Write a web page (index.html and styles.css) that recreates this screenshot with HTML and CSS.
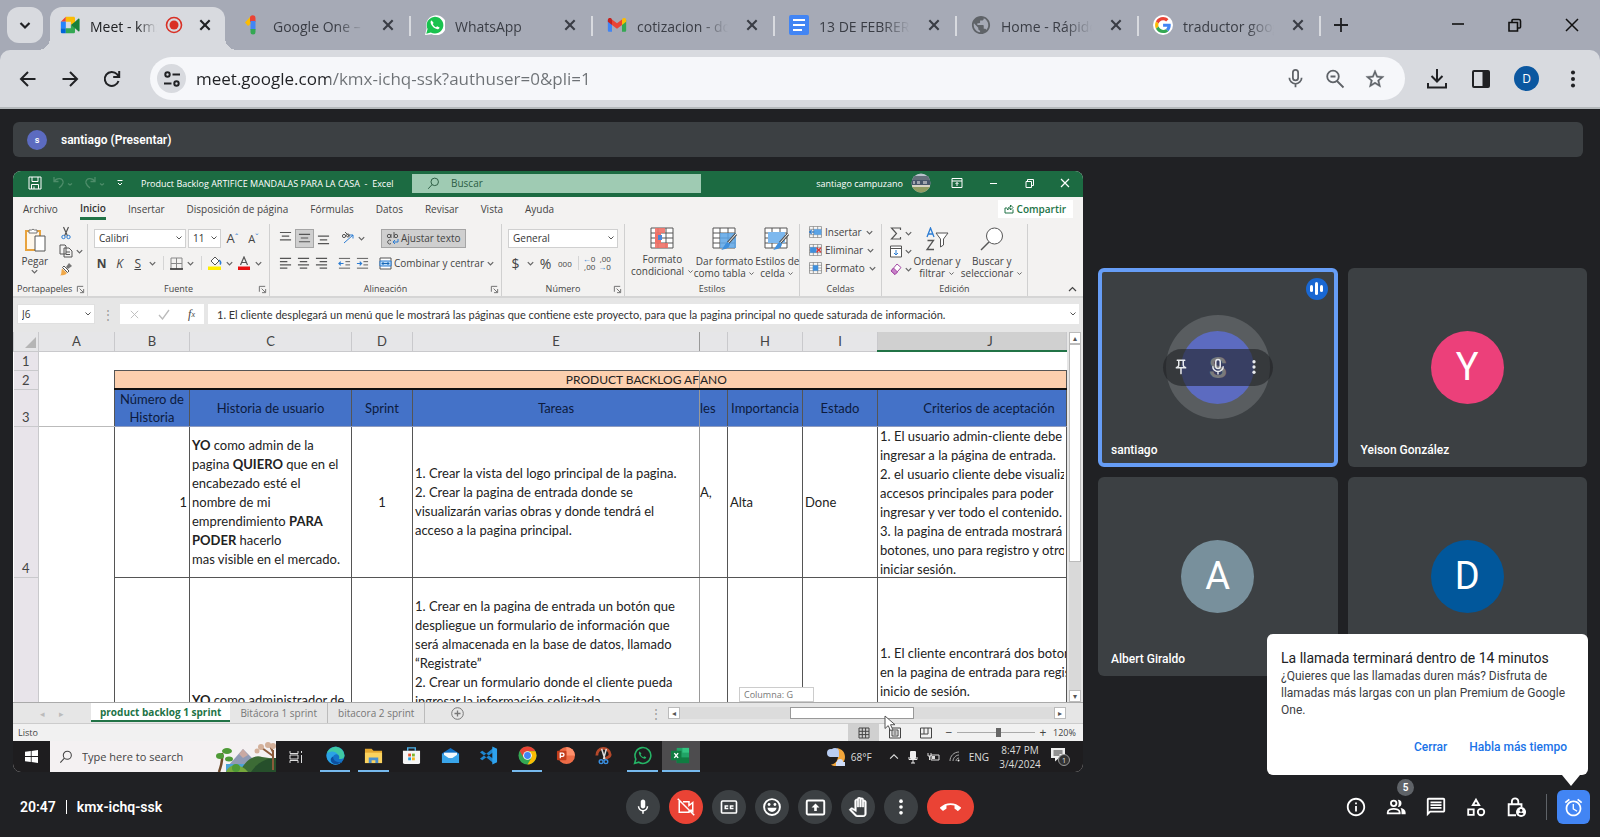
FILE: index.html
```html
<!DOCTYPE html>
<html lang="es">
<head>
<meta charset="utf-8">
<meta name="viewport" content="width=device-width, initial-scale=1">
<title>Meet - kmx-ichq-ssk</title>
<link rel="stylesheet" href="styles.css">
</head>
<body>
<svg class="defs" aria-hidden="true">
  <symbol id="x" viewBox="0 0 12 12"><path d="M2 2l8 8M10 2l-8 8" stroke="currentColor" stroke-width="1.8" fill="none"/></symbol>
  <symbol id="chev" viewBox="0 0 10 10"><path d="M2 3.5l3 3 3-3" stroke="currentColor" stroke-width="1.4" fill="none"/></symbol>
  <symbol id="mic" viewBox="0 0 24 24"><path fill="currentColor" d="M12 14c1.66 0 3-1.34 3-3V5c0-1.66-1.34-3-3-3S9 3.34 9 5v6c0 1.66 1.34 3 3 3zm5-3c0 2.76-2.24 5-5 5s-5-2.24-5-5H5c0 3.53 2.61 6.43 6 6.92V21h2v-3.08c3.39-.49 6-3.39 6-6.92h-2z"/></symbol>
  <symbol id="mico" viewBox="0 0 24 24"><g fill="none" stroke="currentColor" stroke-width="2"><rect x="9" y="2" width="6" height="12" rx="3"/><path d="M5 11a7 7 0 0 0 14 0M12 18v4"/></g></symbol>
  <symbol id="dots" viewBox="0 0 24 24"><g fill="currentColor"><circle cx="12" cy="5" r="2.2"/><circle cx="12" cy="12" r="2.2"/><circle cx="12" cy="19" r="2.2"/></g></symbol>
  <symbol id="lens" viewBox="0 0 16 16"><g fill="none" stroke="currentColor" stroke-width="1.2"><circle cx="9.5" cy="6" r="4.6"/><path d="M6.2 9.4L1.5 14.5"/></g></symbol>
  <symbol id="launch" viewBox="0 0 10 10"><path d="M1.5 7.500V1.500H8M4 4l4 4M8.500 4.500V8.500H4.500" stroke="#666" fill="none"/></symbol>
  <symbol id="lines" viewBox="0 0 14 14"><path d="M1 2.500h12M3 6.500h8M1 10.500h12" stroke="#555" stroke-width="1.200"/></symbol>
  <symbol id="left" viewBox="0 0 14 14"><path d="M1 1.500h12M1 5h8M1 8.500h12M1 12h8" stroke="#555" stroke-width="1.200"/></symbol>
  <symbol id="center" viewBox="0 0 14 14"><path d="M1 1.500h12M3 5h8M1 8.500h12M3 12h8" stroke="#555" stroke-width="1.200"/></symbol>
  <symbol id="right" viewBox="0 0 14 14"><path d="M1 1.500h12M5 5h8M1 8.500h12M5 12h8" stroke="#555" stroke-width="1.200"/></symbol>
  <symbol id="wa" viewBox="0 0 24 24"><path d="M1.500 22.500l1.600-5.700A10 10 0 1 1 7 20.900z" fill="currentColor"/><path d="M8 6.500c-.8.300-1.500 1.300-1.300 2.600.6 3.800 4.200 7.400 8.100 8 1.300.1 2.500-.9 2.700-2.200l-3-1.500-1.300 1.400c-1.700-.7-3.100-2-3.900-3.900l1.100-1.300z" fill="#fff"/></symbol>
  <symbol id="grid" viewBox="0 0 24 22"><path d="M1 1h22v20H1z" fill="#fff"/><path d="M1 1h22v20H1zM1 6h22M1 11h22M1 16h22M8 1v20M16 1v20" fill="none" stroke="#555"/></symbol>
</svg>

<header class="browser">
  <div class="tabstrip">
    <button class="tabsearch" aria-label="Buscar pestañas"><svg width="16" height="16" viewBox="0 0 16 16"><path d="M3.500 6l4.500 4.500L12.500 6" fill="none" stroke="#202124" stroke-width="2.200"/></svg></button>
    <div class="tab active">
      <svg class="fav" viewBox="0 0 24 24"><path d="M1 8l6-6v6z" fill="#ea4335"/><path d="M7 2h9c1.500 0 2 .8 2 2v5l-5 3V8H7z" fill="#fbbc04"/><path d="M1 8h6v8H1z" fill="#2684fc"/><path d="M1 16h6v6H3c-1.400 0-2-.8-2-2z" fill="#0066da"/><path d="M7 16h6v-4l5 3v5c0 1.400-.8 2-2 2H7z" fill="#34a853"/><path d="M13 12l5-4 4-3.500c.6-.5 1.500-.2 1.500.8v13.400c0 1-.9 1.300-1.500.8L18 16z" fill="#188038"/></svg>
      <span class="title">Meet - kmx-ichq-ssk</span>
      <svg class="rec" viewBox="0 0 18 18"><circle cx="9" cy="9" r="7.500" fill="none" stroke="#d93025" stroke-width="1.600"/><circle cx="9" cy="9" r="4.500" fill="#d93025"/></svg>
      <button aria-label="Cerrar"><svg width="14" height="14"><use href="#x"/></svg></button>
    </div>
    <div class="tab"><svg class="fav" viewBox="0 0 20 20"><path d="M8 1l2 6-5 4-3-3.500z" fill="#fbbc04"/><path d="M7 3a2.700 2.700 0 0 1 5.500 0v4H7z" fill="#ea4335"/><path d="M7.500 6h5v9h-5z" fill="#4285f4"/><path d="M7.500 14h5v3a2.500 2.500 0 0 1-5 0z" fill="#34a853"/></svg><span class="title">Google One – Plan</span><button aria-label="Cerrar"><svg width="14" height="14"><use href="#x"/></svg></button></div>
    <div class="tab"><svg class="fav" viewBox="0 0 24 24"><path d="M0 24l2-8A12 12 0 1 1 8 23z" fill="#fff"/><use href="#wa" color="#19c24e"/></svg><span class="title">WhatsApp</span><button aria-label="Cerrar"><svg width="14" height="14"><use href="#x"/></svg></button></div>
    <div class="tab"><svg class="fav" viewBox="0 0 24 24"><path d="M1 6v12.500c0 1 .6 1.500 1.500 1.500H6V9z" fill="#4285f4"/><path d="M23 6v12.500c0 1-.6 1.500-1.500 1.500H18V9z" fill="#34a853"/><path d="M6 5.500l6 4.500 6-4.500V12l-6 4.500L6 12z" fill="#ea4335"/><path d="M1 6c0-2.500 2.500-3 4-2l1 1.500V12L1 8z" fill="#c5221f"/><path d="M23 6c0-2.500-2.500-3-4-2l-1 1.500V12l5-4z" fill="#fbbc04"/></svg><span class="title">cotizacion - documento</span><button aria-label="Cerrar"><svg width="14" height="14"><use href="#x"/></svg></button></div>
    <div class="tab"><svg class="fav" viewBox="0 0 20 20"><rect width="20" height="20" rx="2" fill="#4285f4"/><path d="M4 5h12M4 10h12M4 15h9" stroke="#fff" stroke-width="2.200"/></svg><span class="title">13 DE FEBRERO DE</span><button aria-label="Cerrar"><svg width="14" height="14"><use href="#x"/></svg></button></div>
    <div class="tab"><svg class="fav" viewBox="1 1 22 22"><path fill="#5f6368" d="M12 2C6.480 2 2 6.480 2 12s4.480 10 10 10 10-4.480 10-10S17.520 2 12 2zm-1 17.930c-3.950-.49-7-3.850-7-7.930 0-.62.08-1.210.21-1.790L9 15v1c0 1.100.9 2 2 2v1.930zm6.900-2.540c-.26-.81-1-1.390-1.900-1.390h-1v-3c0-.55-.45-1-1-1H8v-2h2c.55 0 1-.45 1-1V7h2c1.100 0 2-.9 2-2v-.41c2.930 1.190 5 4.060 5 7.410 0 2.080-.8 3.970-2.100 5.390z"/></svg><span class="title">Home - Rápido y</span><button aria-label="Cerrar"><svg width="14" height="14"><use href="#x"/></svg></button></div>
    <div class="tab"><svg class="fav" viewBox="0 0 48 48"><circle cx="24" cy="24" r="24" fill="#fff"/><g transform="translate(5 5) scale(.8)"><path fill="#EA4335" d="M24 9.500c3.540 0 6.710 1.220 9.210 3.600l6.850-6.850C35.900 2.380 30.470 0 24 0 14.620 0 6.510 5.380 2.560 13.220l7.980 6.190C12.430 13.720 17.740 9.500 24 9.500z"/><path fill="#4285F4" d="M46.980 24.550c0-1.570-.15-3.090-.38-4.550H24v9.020h12.940c-.58 2.960-2.260 5.480-4.780 7.180l7.730 6c4.510-4.180 7.090-10.360 7.090-17.650z"/><path fill="#FBBC05" d="M10.530 28.590c-.48-1.450-.76-2.990-.76-4.590s.27-3.140.76-4.590l-7.980-6.190C.92 16.460 0 20.120 0 24c0 3.880.92 7.540 2.560 10.780l7.970-6.190z"/><path fill="#34A853" d="M24 48c6.480 0 11.930-2.130 15.890-5.810l-7.730-6c-2.150 1.450-4.920 2.300-8.160 2.300-6.260 0-11.570-4.220-13.470-9.910l-7.980 6.190C6.510 42.620 14.620 48 24 48z"/></g></svg><span class="title">traductor google</span><button aria-label="Cerrar"><svg width="14" height="14"><use href="#x"/></svg></button></div>
    <button class="newtab" aria-label="Nueva pestaña"><svg width="14" height="14" viewBox="0 0 14 14"><path d="M7 0v14M0 7h14" stroke="#202124" stroke-width="1.800"/></svg></button>
    <div class="winctl">
      <button aria-label="Minimizar"><svg width="14" height="14" viewBox="0 0 14 14"><path d="M1 6h12" stroke="#111" stroke-width="1.600"/></svg></button>
      <button aria-label="Restaurar"><svg width="14" height="14" viewBox="0 0 14 14"><path d="M1 4.500h8.500V13H1zM4 4V2.500q0-1 1-1h6q1.500 0 1.500 1.500v6q0 1-1 1H10" fill="none" stroke="#111" stroke-width="1.600"/></svg></button>
      <button aria-label="Cerrar ventana"><svg width="14" height="14" viewBox="0 0 14 14"><path d="M1 1l12 12M13 1L1 13" stroke="#111" stroke-width="1.500"/></svg></button>
    </div>
  </div>
  <div class="toolbar">
    <div class="nav">
      <button aria-label="Atrás"><svg width="18" height="18" viewBox="0 0 18 18"><path d="M16.500 9H2M9 2L2 9l7 7" class="ln"/></svg></button>
      <button aria-label="Adelante"><svg width="18" height="18" viewBox="0 0 18 18"><path d="M1.500 9H16M9 2l7 7-7 7" class="ln"/></svg></button>
      <button aria-label="Recargar"><svg width="18" height="18" viewBox="0 0 18 18"><path d="M15.500 11A7 7 0 1 1 14 4.200l2 2M16.200 1v6h-6" class="ln"/></svg></button>
    </div>
    <form class="omnibox">
      <button type="button" class="site" aria-label="Información del sitio"><svg width="18" height="18" viewBox="0 0 18 18"><g fill="none" stroke="#202124" stroke-width="2"><circle cx="4.500" cy="4.500" r="2.200"/><path d="M9.500 4.500H17M1 13.500h7.500"/><circle cx="13.500" cy="13.500" r="2.200"/></g></svg></button>
      <input class="url" aria-label="Dirección" value="meet.google.com/kmx-ichq-ssk?authuser=0&amp;pli=1">
      <button type="button" aria-label="Voz"><svg width="21" height="21"><use href="#mico"/></svg></button>
      <button type="button" aria-label="Zoom"><svg width="20" height="20" viewBox="0 0 20 20"><g fill="none" stroke="currentColor" stroke-width="1.800"><circle cx="8" cy="7.500" r="5.800"/><path d="M12 12l6.500 6.500M5.500 7.500h5"/></g></svg></button>
      <button type="button" aria-label="Marcador"><svg width="22" height="22" viewBox="0 0 24 24"><path fill="currentColor" stroke="currentColor" stroke-width=".4" d="M22 9.240l-7.190-.62L12 2 9.190 8.630 2 9.240l5.460 4.730L5.820 21 12 17.270 18.180 21l-1.630-7.030L22 9.240zM12 15.400l-3.760 2.270 1-4.280-3.320-2.880 4.380-.38L12 6.100l1.710 4.040 4.380.38-3.320 2.880 1 4.280L12 15.400z"/></svg></button>
    </form>
    <div class="actions">
      <button aria-label="Descargas"><svg width="22" height="22" viewBox="0 0 22 22"><path d="M11 1v12M5.500 8l5.500 5.500L16.500 8M2 15v4.500h18V15" class="ln"/></svg></button>
      <button aria-label="Panel lateral"><svg width="20" height="20" viewBox="0 0 20 20"><rect x="2" y="2" width="16" height="16" rx="1" class="ln"/><path d="M11.500 2H18v16h-6.500z" fill="#202124"/></svg></button>
      <button class="me" aria-label="Perfil">D</button>
      <button aria-label="Menú"><svg width="22" height="22"><use href="#dots"/></svg></button>
    </div>
  </div>
</header>

<main class="meet">
  <div class="banner"><span class="av">s</span>santiago (Presentar)</div>
  <div class="stage">
    <section class="share" aria-label="Presentación">
      <div class="xtitle">
        <div class="quick">
          <button aria-label="Guardar"><svg width="14" height="14" viewBox="0 0 14 14"><path d="M1 1h12v12H1zM4 1v4.500h6V1M3.500 13V8.500h7V13M6 13v-2.500" fill="none" stroke="#fff"/></svg></button>
          <button class="dim" aria-label="Deshacer"><svg width="22" height="14" viewBox="0 0 22 14"><path d="M2 1v4.500h4.500M2 5.500C5 1 12 2 11 7c-.5 2-2 3.500-4 5M16 7.500l2 1.500 2-1.500" fill="none" stroke="currentColor" stroke-width="1.300"/></svg></button>
          <button class="dim" aria-label="Rehacer"><svg width="22" height="14" viewBox="0 0 22 14"><path d="M11 1v4.500H6.500M11 5.500C8 1 1 2 2 7c.5 2 2 3.500 4 5M16 7.500l2 1.500 2-1.500" fill="none" stroke="currentColor" stroke-width="1.300"/></svg></button>
          <button aria-label="Personalizar"><svg width="8" height="8" viewBox="0 0 8 8"><path d="M1.500 1.500h5M2 4l2 2 2-2" stroke="#fff" fill="none"/></svg></button>
        </div>
        <h1>Product Backlog ARTIFICE MANDALAS PARA LA CASA &nbsp;-&nbsp; Excel</h1>
        <label class="xsearch"><svg width="13" height="13"><use href="#lens"/></svg><input placeholder="Buscar" aria-label="Buscar"></label>
        <div class="account"><span>santiago campuzano</span>
          <svg width="20" height="20" viewBox="0 0 20 20"><clipPath id="cp"><circle cx="10" cy="10" r="9.500"/></clipPath><g clip-path="url(#cp)"><path d="M0 0h20v20H0z" fill="#b9c2cc"/><path d="M0 3h20v4H0z" fill="#65707c"/><path d="M0 7h20v6H0z" fill="#48566b"/><path d="M2 8h2v3H2zM6 8h3v3H6zM12 8h4v3h-4z" fill="#9fa3ad"/><path d="M0 13h20v7H0z" fill="#8f9b62"/><path d="M0 12h20v2H0z" fill="#d8d3c5"/></g></svg></div>
        <div class="xwin">
          <button aria-label="Opciones de cinta"><svg width="12" height="12" viewBox="0 0 12 12"><path d="M1 1.500h10v9H1zM1 4h10M6 9V5.500M4.500 7L6 5.500 7.500 7" fill="none" stroke="#fff"/></svg></button>
          <button aria-label="Minimizar"><svg width="9" height="9" viewBox="0 0 9 9"><path d="M1 4.500h7" stroke="#fff"/></svg></button>
          <button aria-label="Restaurar"><svg width="9" height="9" viewBox="0 0 9 9"><path d="M1 2.500h5.500v6H1zM2.500 2V.5h6v6H7" fill="none" stroke="#fff"/></svg></button>
          <button aria-label="Cerrar"><svg width="10" height="10" viewBox="0 0 10 10"><path d="M1 1l8 8M9 1L1 9" stroke="#fff" stroke-width="1.200"/></svg></button>
        </div>
      </div>
      <nav class="xtabs">
        <button>Archivo</button><button class="on">Inicio</button><button>Insertar</button><button>Disposición de página</button><button>Fórmulas</button><button>Datos</button><button>Revisar</button><button>Vista</button><button>Ayuda</button>
        <button class="sharebtn"><svg width="10" height="10" viewBox="0 0 10 10"><path d="M3 4H1v5h8V5.500M3.500 6c0-2 1-3 3-3V1L9 3.500 6.500 6V4.500C5 4.500 4 5 3.500 6z" fill="none" stroke="#217346"/></svg>Compartir</button>
      </nav>
      <div class="ribbon">
        <div class="grp g1">
          <div class="body">
            <button class="big"><svg width="22" height="26" viewBox="0 0 22 26"><path d="M2 4h14v19H2z" fill="#fff7ea" stroke="#e8a33d" stroke-width="2"/><path d="M5 6V3h2.500a2 2 0 0 1 3 0H13v3z" fill="#fff" stroke="#777"/><path d="M11 9h10v15H11z" fill="#fff" stroke="#555"/></svg><span>Pegar</span><svg class="c" width="9" height="9"><use href="#chev"/></svg></button>
            <div class="col">
              <button aria-label="Cortar"><svg width="14" height="14" viewBox="0 0 14 14"><path d="M4.500 1l4 9M9.500 1l-4 9" stroke="#555" stroke-width="1.200"/><circle cx="4.500" cy="11" r="1.700" fill="none" stroke="#2b7cd3"/><circle cx="9.500" cy="11" r="1.700" fill="none" stroke="#2b7cd3"/></svg></button>
              <button aria-label="Copiar"><svg width="14" height="14" viewBox="0 0 14 14"><path d="M1 1h5l1 1v8H1zM5 4h5l3 3v6H5zM7 8h4M7 10.500h4" fill="#f3f2f1" stroke="#555"/></svg><svg class="c" width="9" height="9"><use href="#chev"/></svg></button>
              <button aria-label="Copiar formato"><svg width="14" height="14" viewBox="0 0 14 14"><path d="M7 5l3-4 3 3-4 3z" fill="#777"/><path d="M5 4l5 5-1.500 1.500-5-5z" fill="#fff" stroke="#555"/><path d="M3 6.500L8 11c-2 2.500-4 2-7 2.500 2-1.500 1-4 2-7z" fill="#f0a94a"/></svg></button>
            </div>
          </div>
          <div class="lbl">Portapapeles</div><svg class="ln2" width="9" height="9"><use href="#launch"/></svg>
        </div>
        <div class="grp g2">
          <div class="rows">
            <div class="row"><select class="ff" aria-label="Fuente"><option>Calibri</option></select><select class="fs" aria-label="Tamaño"><option>11</option></select><button class="ag">A<sup>ˆ</sup></button><button class="as">A<sup>ˇ</sup></button></div>
            <div class="row r2"><button class="b">N</button><button class="i">K</button><button class="u">S</button><svg class="c" width="9" height="9"><use href="#chev"/></svg><i class="sep"></i>
              <button aria-label="Bordes"><svg width="13" height="13" viewBox="0 0 13 13"><path d="M1 1h11v11H1zM1 6.500h11M6.500 1v11" fill="none" stroke="#888"/><path d="M0 12h13" stroke="#333" stroke-width="1.500"/></svg></button><svg class="c" width="9" height="9"><use href="#chev"/></svg><i class="sep"></i>
              <button aria-label="Relleno"><svg width="14" height="14" viewBox="0 0 14 14"><path d="M3 5l4-4 4 4-4 4z" fill="#fff" stroke="#555"/><path d="M11 4c1.500 1 2 3 1 4.500" stroke="#2b7cd3" stroke-width="1.500" fill="none"/><path d="M0 10.500h13V14H0z" fill="#ffee00"/></svg></button><svg class="c" width="9" height="9"><use href="#chev"/></svg>
              <button aria-label="Color de fuente"><svg width="14" height="14" viewBox="0 0 14 14"><path d="M3.500 9L7 1l3.500 8M5 6.500h4" fill="none" stroke="#555" stroke-width="1.200"/><path d="M1 10.500h12V14H1z" fill="#e81010"/></svg></button><svg class="c" width="9" height="9"><use href="#chev"/></svg>
            </div>
          </div>
          <div class="lbl">Fuente</div><svg class="ln2" width="9" height="9"><use href="#launch"/></svg>
        </div>
        <div class="grp g3">
          <div class="rows">
            <div class="row al"><button aria-label="Arriba"><svg width="13" height="13" viewBox="0 2 14 14"><use href="#lines" width="14" height="14"/></svg></button><button class="sel" aria-label="Medio"><svg width="13" height="13"><use href="#lines"/></svg></button><button aria-label="Abajo"><svg width="13" height="13" viewBox="0 -2 14 14"><use href="#lines" width="14" height="14"/></svg></button>
              <button class="ori" aria-label="Orientación"><svg width="14" height="14" viewBox="0 0 14 14"><path d="M3 12L12 4M12 4H8.500M12 4v3.500" stroke="#2b7cd3" fill="none"/><circle cx="3" cy="5" r="1.600" fill="none" stroke="#555"/><path d="M4 1l4 4" stroke="#555"/><circle cx="7" cy="4.500" r="1.500" fill="none" stroke="#555"/></svg></button><svg class="c" width="9" height="9"><use href="#chev"/></svg>
              <button class="wrap"><svg width="13" height="13" viewBox="0 0 13 13"><circle cx="3" cy="4" r="1.700" fill="none" stroke="#555"/><path d="M5 2v4M8 0v6M5 8.500a2 2 0 1 0 0 3" stroke="#555" fill="none"/><circle cx="10" cy="4" r="1.700" fill="none" stroke="#555"/><path d="M12 7v3H7M9 8l-2 2 2 2" stroke="#2b7cd3" fill="none"/></svg>Ajustar texto</button></div>
            <div class="row al r2"><button aria-label="Izquierda"><svg width="13" height="13"><use href="#left"/></svg></button><button aria-label="Centro"><svg width="13" height="13"><use href="#center"/></svg></button><button aria-label="Derecha"><svg width="13" height="13"><use href="#right"/></svg></button>
              <button class="ori" aria-label="Reducir sangría"><svg width="13" height="13" viewBox="0 0 14 14"><path d="M1 1.500h12M8 5h5M8 8.500h5M1 12h12" stroke="#555"/><path d="M1 7h5M3 5L1 7l2 2" stroke="#2b7cd3" fill="none" stroke-width="1.300"/></svg></button><button aria-label="Aumentar sangría"><svg width="13" height="13" viewBox="0 0 14 14"><path d="M1 1.500h12M8 5h5M8 8.500h5M1 12h12" stroke="#555"/><path d="M1 7h5M4 5l2 2-2 2" stroke="#2b7cd3" fill="none" stroke-width="1.300"/></svg></button>
              <button class="merge"><svg width="13" height="13" viewBox="0 0 13 13"><path d="M1 1h11v11H1z" fill="#fff" stroke="#555"/><path d="M1 4h11v5H1z" fill="#bfdcf6" stroke="#2b7cd3"/><path d="M3 6.500h7M4.500 5L3 6.500 4.500 8M8.500 5L10 6.500 8.500 8" stroke="#1667b7" fill="none"/></svg>Combinar y centrar <svg class="c" width="9" height="9"><use href="#chev"/></svg></button></div>
          </div>
          <div class="lbl">Alineación</div><svg class="ln2" width="9" height="9"><use href="#launch"/></svg>
        </div>
        <div class="grp g4">
          <div class="rows">
            <div class="row"><select class="nf" aria-label="Formato de número"><option>General</option></select></div>
            <div class="row r2 num"><button class="lg">$</button><svg class="c" width="9" height="9"><use href="#chev"/></svg><button class="lg">%</button><button class="sm">000</button><i class="sep"></i>
              <button class="dec"><b>←</b>0<br>,00</button><button class="dec">,00<br><b>→</b>0</button></div>
          </div>
          <div class="lbl">Número</div><svg class="ln2" width="9" height="9"><use href="#launch"/></svg>
        </div>
        <div class="grp g5">
          <div class="body">
            <button class="big"><svg width="24" height="22"><use href="#grid"/><path d="M5 1h10v5H5zM5 16h13v5H5z" fill="#f07167" opacity=".9"/><path d="M5 6h6v10H5z" fill="#f07167"/><path d="M8 8h4v5H8z" fill="#4a86d8"/></svg><span>Formato<br>condicional <svg class="c" width="7" height="7"><use href="#chev"/></svg></span></button>
            <button class="big"><svg width="26" height="24" viewBox="0 0 26 24"><use href="#grid" width="24" height="22"/><path d="M8 6h16v15H8z" fill="#5ca4e6" opacity=".85"/><path d="M24 7l-8 9" stroke="#555" stroke-width="3"/><path d="M24 7l-8 9" stroke="#fff"/><path d="M16 15l2 2c-1 5-5 5-9 6 3-2 3-6 7-8z" fill="#3f8fdc"/></svg><span>Dar formato<br>como tabla <svg class="c" width="7" height="7"><use href="#chev"/></svg></span></button>
            <button class="big"><svg width="26" height="24" viewBox="0 0 26 24"><use href="#grid" width="24" height="22"/><path d="M4 5h17v11H4z" fill="#7db8ee"/><path d="M24 7l-8 9" stroke="#555" stroke-width="3"/><path d="M24 7l-8 9" stroke="#fff"/><path d="M16 15l2 2c-1 5-5 5-9 6 3-2 3-6 7-8z" fill="#3f8fdc"/></svg><span>Estilos de<br>celda <svg class="c" width="7" height="7"><use href="#chev"/></svg></span></button>
          </div>
          <div class="lbl">Estilos</div>
        </div>
        <div class="grp g6">
          <div class="col">
            <button><svg width="13" height="12" viewBox="0 0 24 22"><use href="#grid"/><path d="M9 6h14v10H9z" fill="#5ca4e6"/><path d="M10 11H1M5 7l-4 4 4 4" stroke="#2b7cd3" stroke-width="2" fill="none"/></svg>Insertar<svg class="c" width="9" height="9"><use href="#chev"/></svg></button>
            <button><svg width="13" height="12" viewBox="0 0 24 22"><use href="#grid"/><path d="M2 6h12v10H2z" fill="#3f8fdc"/><path d="M14 7l8 8M22 7l-8 8" stroke="#d33" stroke-width="2.500"/></svg>Eliminar<svg class="c" width="9" height="9"><use href="#chev"/></svg></button>
            <button><svg width="13" height="12" viewBox="0 0 24 22"><use href="#grid"/><path d="M7 6h10v10H7z" fill="#3f8fdc"/></svg>Formato<svg class="c" width="9" height="9"><use href="#chev"/></svg></button>
          </div>
          <div class="lbl">Celdas</div>
        </div>
        <div class="grp g7">
          <div class="body">
            <div class="col">
              <button aria-label="Autosuma"><svg width="12" height="13" viewBox="0 0 12 13"><path d="M10.500 3V1H1.500l5 5.500-5 5.500h9v-2" fill="none" stroke="#555" stroke-width="1.200"/></svg><svg class="c" width="9" height="9"><use href="#chev"/></svg></button>
              <button aria-label="Rellenar"><svg width="12" height="13" viewBox="0 0 12 13"><path d="M.5 1h11v11H.5zM.5 3.500h11" fill="#fff" stroke="#555"/><path d="M6 5v5M4 8l2 2 2-2" stroke="#2b7cd3" fill="none"/></svg><svg class="c" width="9" height="9"><use href="#chev"/></svg></button>
              <button aria-label="Borrar"><svg width="12" height="13" viewBox="0 0 12 13"><path d="M1 8l6-7 4 3.500-6 7z" fill="#fff" stroke="#a349a4"/><path d="M1 8l2.500-3L7.500 9 5 11.500z" fill="#c77fc8" stroke="#a349a4"/></svg><svg class="c" width="9" height="9"><use href="#chev"/></svg></button>
            </div>
            <button class="big"><svg width="24" height="24" viewBox="0 0 24 24"><path d="M2 10L5.500 1 9 10M3 7h5" fill="none" stroke="#2b7cd3" stroke-width="1.300"/><path d="M2.500 13.500h6L2 22.500h7" fill="none" stroke="#555" stroke-width="1.300"/><path d="M11 6h12l-4.500 6v6l-3 2v-8z" fill="#fff" stroke="#555"/></svg><span>Ordenar y<br>filtrar <svg class="c" width="7" height="7"><use href="#chev"/></svg></span></button>
            <button class="big"><svg width="24" height="24" viewBox="0 0 24 24"><circle cx="14.500" cy="9" r="8" fill="#fff" stroke="#555"/><path d="M9 15l-8 8" stroke="#555" stroke-width="1.400"/></svg><span>Buscar y<br>seleccionar <svg class="c" width="7" height="7"><use href="#chev"/></svg></span></button>
          </div>
          <div class="lbl">Edición</div>
        </div>
        <button class="collapse" aria-label="Contraer la cinta"><svg width="9" height="9" viewBox="0 0 9 9"><path d="M1 6l3.500-3.500L8 6" fill="none" stroke="#444" stroke-width="1.200"/></svg></button>
      </div>
      <div class="fbar">
        <select class="namebox" aria-label="Cuadro de nombres"><option>J6</option></select>
        <span class="grip">⋮</span>
        <div class="fx"><button aria-label="Cancelar"><svg width="11" height="11" viewBox="0 0 12 12"><path d="M2 2l8 8M10 2l-8 8" stroke="#bbb"/></svg></button><button aria-label="Introducir"><svg width="12" height="11" viewBox="0 0 12 11"><path d="M1 6l3.500 4L11 1" stroke="#bbb" stroke-width="1.300" fill="none"/></svg></button><button class="f">f<small>x</small></button></div>
        <input class="formula" aria-label="Barra de fórmulas" value="1. El cliente desplegará un menú que le mostrará las páginas que contiene este proyecto, para que la pagina principal no quede saturada de información.">
      </div>
      <div class="sheetwrap">
        <div class="sheet">
          <table>
            <colgroup><col class="w0"><col class="wa"><col class="wb"><col class="wc"><col class="wd"><col class="we"><col class="wg"><col class="wh"><col class="wi"><col></colgroup>
            <thead><tr><th class="corner"><svg width="11" height="11" viewBox="0 0 11 11"><path d="M11 0v11H0z" fill="#b5b5b5"/></svg></th><th>A</th><th>B</th><th>C</th><th>D</th><th class="fz">E</th><th></th><th>H</th><th>I</th><th class="cur">J</th></tr></thead>
            <tbody>
              <tr class="t1"><th>1</th><td class="n"></td><td class="n" colspan="4"></td><td class="n" colspan="4"></td></tr>
              <tr class="t2"><th>2</th><td class="n"></td><td colspan="4" class="pb r fz">PRODUCT BACKLOG AF</td><td colspan="4" class="pb">ANO</td></tr>
              <tr class="t3"><th>3</th><td class="n fr"></td><td>Número de Historia</td><td>Historia de usuario</td><td>Sprint</td><td class="fz">Tareas</td><td class="l">les</td><td>Importancia</td><td>Estado</td><td class="crit">Criterios de aceptación</td></tr>
              <tr class="t4"><th>4</th><td class="n"></td><td class="r">1</td><td><b>YO</b> como admin de la<br>pagina <b>QUIERO</b> que en el<br>encabezado esté el<br>nombre de mi<br>emprendimiento <b>PARA</b><br><b>PODER</b> hacerlo<br>mas visible en el mercado.</td><td class="m">1</td><td class="fz">1. Crear la vista del logo principal de la pagina.<br>2. Crear la pagina de entrada donde se<br>visualizarán varias obras y donde tendrá el<br>acceso a la pagina principal.</td><td class="l">A,<br>&nbsp;</td><td>Alta</td><td>Done</td><td><div class="clip">1. El usuario admin-cliente debe<br>ingresar a la página de entrada.<br>2. el usuario cliente debe visualizar<br>accesos principales para poder<br>ingresar y ver todo el contenido.<br>3. la pagina de entrada mostrará dos<br>botones, uno para registro y otro para<br>iniciar sesión.</div></td></tr>
              <tr class="t5"><th></th><td class="n"></td><td></td><td class="p3"><b>YO</b> como administrador de</td><td></td><td class="p1 fz">1. Crear en la pagina de entrada un botón que<br>despliegue un formulario de información que<br>será almacenada en la base de datos, llamado<br>“Registrate”<br>2. Crear un formulario donde el cliente pueda<br>ingresar la información solicitada</td><td></td><td></td><td></td><td class="p2">1. El cliente encontrará dos botones<br>en la pagina de entrada para registro<br>inicio de sesión.</td></tr>
            </tbody>
          </table>
        </div>
        <div class="vscroll"><span class="arr">▴</span><span class="thumb"></span><span class="track"></span><span class="arr">▾</span></div>
        <div class="coltip">Columna: G</div>
      </div>
      <div class="stabs">
        <div class="prev"><span>◂</span><span>▸</span></div>
        <button class="on">product backlog 1 sprint</button><button>Bitácora 1 sprint</button><button>bitacora 2 sprint</button>
        <button class="add" aria-label="Hoja nueva"><svg width="13" height="13" viewBox="0 0 13 13"><circle cx="6.500" cy="6.500" r="5.800" fill="none" stroke="#777"/><path d="M6.500 3.500v6M3.500 6.500h6" stroke="#777" stroke-width="1.300"/></svg></button>
        <div class="hscroll"><span class="grip">⋮</span><span class="arr">◂</span><span class="ht"><span class="hthumb"></span></span><span class="arr">▸</span></div>
      </div>
      <div class="status"><span>Listo</span>
        <div class="views">
          <button class="sel" aria-label="Normal"><svg width="12" height="12" viewBox="0 0 12 12"><path d="M1 1h10v10H1zM1 4.300h10M1 7.600h10M4.300 1v10M7.600 1v10" fill="none" stroke="#444"/></svg></button>
          <button aria-label="Diseño de página"><svg width="12" height="12" viewBox="0 0 12 12"><path d="M.5 1h11v10H.5zM3 3h6v6H3zM4.500 5h3M4.500 7h3" fill="none" stroke="#444"/></svg></button>
          <button aria-label="Vista de saltos"><svg width="12" height="12" viewBox="0 0 12 12"><path d="M.5 1h11v10H.5zM4 1v6M8 1v6M.5 7H8" fill="none" stroke="#444"/></svg></button>
          <span>−</span><input type="range" aria-label="Zoom de hoja" min="0" max="100" value="53"><span>+</span><span class="pct">120%</span>
        </div>
        <svg class="cursor" width="12" height="17" viewBox="0 0 12 17"><path d="M1 1v12.500l3.200-2.900 2.300 5 2.300-1-2.300-4.900H11z" fill="#fff" stroke="#555"/></svg>
      </div>
      <div class="taskbar">
        <button class="start" aria-label="Inicio"><svg width="13" height="13" viewBox="0 0 13 13"><path d="M0 1.800l5.800-.8v5.100H0zM6.600.9L13 0v6.100H6.600zM0 6.900h5.800V12L0 11.200zM6.600 6.900H13V13l-6.400-.9z" fill="#fff"/></svg></button>
        <label class="tsearch"><svg width="14" height="14"><use href="#lens"/></svg><input placeholder="Type here to search" aria-label="Type here to search">
          <svg class="scene" width="60" height="30" viewBox="0 0 60 30"><path d="M12 24L27 7l14 14z" fill="#8f9ab5"/><path d="M27 7l5 6-5 3-4-4z" fill="#c9a9a3"/><path d="M10 22h35v8H10z" fill="#4aa3d6"/><path d="M24 30c4-10 13-18 22-15l14 2v13z" fill="#3c6b35"/><path d="M35 30c5-8 14-14 25-14v14z" fill="#264f2b"/><path d="M10 30c3-9 15-9 22 0z" fill="#76a83c"/><path d="M3 30c2-7 4-10 3-19" stroke="#6e4a2a" stroke-width="2.500" fill="none"/><g fill="#4e9a36"><ellipse cx="4" cy="14" rx="4" ry="3"/><ellipse cx="11" cy="9" rx="5" ry="3"/><ellipse cx="13" cy="17" rx="4" ry="2.500"/><circle cx="20" cy="26" r="4"/></g><path d="M57 28V8M57 14L46 6M57 10l-4-8" stroke="#8a5a3a" stroke-width="2" fill="none"/><g fill="#d3b09a"><circle cx="45" cy="5" r="3"/><circle cx="52" cy="3" r="3"/><circle cx="41" cy="9" r="2.500"/><circle cx="57" cy="4" r="3"/></g></svg></label>
        <button class="tv" aria-label="Vista de tareas"><svg width="14" height="14" viewBox="0 0 14 14"><path d="M1 1v2.500h8V1M1 13v-2.500h8V13M1 5h8v4H1zM12.500 1v2M12.500 5v8" fill="none" stroke="#ddd"/></svg></button>
        <div class="apps">
          <button class="run" aria-label="Edge"><svg viewBox="0 0 20 20"><circle cx="10" cy="10" r="9.500" fill="#1473c8"/><path d="M.8 8A9.500 9.500 0 0 1 19.500 10c0 3-3 4.500-6 3.500 1-1 .5-3.500-1-4.500C9 6.500 4 6 .8 8z" fill="#3fc9a4"/><path d="M.8 8C4 5 10 5 12.500 9 9 8 6 11 8 14.500c1.500 3 6 4 9 2A9.500 9.500 0 0 1 .8 8z" fill="#2ba3e6"/><path d="M7.500 11c0 5 5 7 9.500 5.500-3 3-9 4-11.500 0-1.200-2-.5-4.500 2-5.500z" fill="#0d4f9e"/></svg></button>
          <button class="run" aria-label="Explorador"><svg viewBox="0 0 20 20"><path d="M1 3h7l2 2h9v13H1z" fill="#e3a72f"/><path d="M1 7h18v11H1z" fill="#fbd25e"/><path d="M5 18v-6h10v6h-3v-3H8v3z" fill="#4a8fce"/></svg></button>
          <button aria-label="Store"><svg viewBox="0 0 20 20"><path d="M6 5V2h8v3" fill="none" stroke="#4db1e8" stroke-width="1.500"/><path d="M1 5h18v12q0 2-2 2H3q-2 0-2-2z" fill="#f5f5f5"/><path d="M6.500 8h3v3h-3z" fill="#e8532b"/><path d="M10.500 8h3v3h-3z" fill="#7db52c"/><path d="M6.500 12h3v3h-3z" fill="#1f9fe0"/><path d="M10.500 12h3v3h-3z" fill="#f3b51e"/></svg></button>
          <button aria-label="Correo"><svg viewBox="0 0 20 20"><path d="M1 8l9-6 9 6v10H1z" fill="#0f6fc5"/><path d="M3 7h14v6H3z" fill="#f3f8fc"/><path d="M1 8l9 6 9-6v10H1z" fill="#39a5ea"/></svg></button>
          <button aria-label="VS Code"><svg viewBox="0 0 20 20"><path d="M1 6.500L3.500 5 15 13.500V18zM1 13.500L3.500 15 15 6.500V2z" fill="#1e86cf"/><path d="M14 .5l5 2.300v14.400l-5 2.300z" fill="#2ea2ee"/></svg></button>
          <button class="run" aria-label="Chrome"><svg viewBox="0 0 20 20"><circle cx="10" cy="10" r="9.500" fill="#34a853"/><path d="M1.800 5.200A9.500 9.500 0 0 1 18.300 5.500H10z" fill="#ea4335"/><path d="M1.800 5.200L6 12.300 10 5.500z" fill="#ea4335"/><path d="M18.300 5.500A9.500 9.500 0 0 1 10 19.500l4.200-7.200L12 5.500z" fill="#fbbc04"/><circle cx="10" cy="10" r="4.600" fill="#fff"/><circle cx="10" cy="10" r="3.600" fill="#4285f4"/></svg></button>
          <button aria-label="PowerPoint"><svg viewBox="0 0 20 20"><circle cx="11" cy="10" r="9" fill="#ed6c47"/><path d="M11 1a9 9 0 0 1 9 9h-9z" fill="#ff8f6b"/><rect x="1" y="5" width="10" height="10" rx="1" fill="#c43e1c"/><path d="M4.500 13V7.500h2.200a1.700 1.700 0 0 1 0 3.400H4.500" fill="none" stroke="#fff" stroke-width="1.400"/></svg></button>
          <button aria-label="Recortes"><svg viewBox="0 0 20 20"><path d="M3 10a7 7 0 1 1 14-1c0 3-3 3-5 4" fill="none" stroke="#b5482a" stroke-width="3"/><path d="M8 3l3.500 11M13 3l-3 11" stroke="#ddd" stroke-width="1.600"/><circle cx="7.500" cy="16.500" r="2" fill="none" stroke="#3a8fe0" stroke-width="1.500"/><circle cx="12.500" cy="16.500" r="2" fill="none" stroke="#3a8fe0" stroke-width="1.500"/></svg></button>
          <button class="run" aria-label="WhatsApp"><svg viewBox="0 0 24 24"><path d="M2 22l1.600-5.500A10 10 0 1 1 7.300 20.500z" fill="none" stroke="#25b365" stroke-width="2"/><path d="M8.500 7c-.8.300-1.300 1.200-1.100 2.300.6 3.300 3.700 6.300 7 6.900 1.200.1 2.200-.8 2.400-1.900l-2.600-1.300-1.100 1.200c-1.500-.6-2.700-1.700-3.400-3.400l1-1.100z" fill="#25b365"/></svg></button>
          <button class="run cur" aria-label="Excel"><svg viewBox="0 0 20 20"><path d="M6 2h13v16H6z" fill="#21a366"/><path d="M12 2h7v5h-7z" fill="#33c481"/><path d="M12 12h7v6H6v-6z" fill="#107c41"/><rect x="0" y="5" width="11" height="10" fill="#107c41"/><path d="M3.500 7.500l4 5M7.500 7.500l-4 5" stroke="#fff" stroke-width="1.500"/></svg></button>
        </div>
        <div class="tray">
          <svg width="20" height="20" viewBox="0 0 20 20"><path d="M11 1c5 1 8 4 8 9s-4 9-9 9c-2 0-4-.5-5-1.500C11 17 14 10 11 1z" fill="#f2a63a"/><circle cx="5" cy="6" r="4" fill="#b9cdf2"/><circle cx="9" cy="5" r="4" fill="#b9cdf2"/><path d="M3 6h10v4H4z" fill="#b9cdf2"/><circle cx="14" cy="15" r="3" fill="#cfdcf7"/><path d="M10 15h9v4h-9z" fill="#cfdcf7"/></svg><span class="temp">68°F</span>
          <svg width="10" height="10" viewBox="0 0 9 9"><path d="M1 6l3.500-3.500L8 6" fill="none" stroke="#ddd"/></svg>
          <svg width="10" height="14" viewBox="0 0 10 14"><rect x="2" y="1" width="6" height="8" rx="1" fill="#eee"/><path d="M1 7v2.500h8V7M5 9.500V13M3 13h4" stroke="#eee" fill="none"/></svg>
          <svg width="13" height="10" viewBox="0 0 13 10"><path d="M4 3h8v5H4z" fill="none" stroke="#ddd"/><path d="M5 4h3v3H5z" fill="#ddd"/><path d="M1 1v3h3V1M2.500 4v4" stroke="#ddd" fill="none"/></svg>
          <svg width="11" height="11" viewBox="0 0 11 11"><path d="M1 10C1 5 5 1 10 1M4 10c0-3 3-6 6-6M7 10c0-2 1.500-3 3-3" fill="none" stroke="#aaa"/><circle cx="9.500" cy="9.500" r="1" fill="#eee"/></svg>
          <span>ENG</span><span class="clock">8:47 PM<br>3/4/2024</span>
          <span class="notif"><svg width="14" height="14" viewBox="0 0 14 14"><path d="M0 0h14v10H8l-4 3.500V10H0z" fill="#eee"/><path d="M2.500 3h9M2.500 5h9M2.500 7h6" stroke="#333"/></svg><em>1</em></span>
        </div>
      </div>
    </section>
    <section class="tiles" aria-label="Participantes">
      <article class="tile speaking"><span class="halo"></span><span class="face s">S</span><span class="name">santiago</span>
        <span class="wave"><i></i><i></i><i></i></span>
        <div class="pill"><button aria-label="Fijar"><svg width="18" height="18" viewBox="0 0 24 24"><path fill="currentColor" d="M14 4v5c0 1.120.37 2.160 1 3H9c.65-.86 1-1.900 1-3V4h4m3-2H7c-.55 0-1 .45-1 1s.45 1 1 1h1v5c0 1.660-1.340 3-3 3v2h5.970v7l1 1 1-1v-7H19v-2c-1.660 0-3-1.340-3-3V4h1c.55 0 1-.45 1-1s-.45-1-1-1z"/></svg></button><button aria-label="Silenciar"><svg width="18" height="18"><use href="#mico"/></svg></button><button aria-label="Más"><svg width="18" height="18"><use href="#dots"/></svg></button></div>
      </article>
      <article class="tile"><span class="face y">Y</span><span class="name">Yeison González</span></article>
      <article class="tile"><span class="face a">A</span><span class="name">Albert Giraldo</span></article>
      <article class="tile"><span class="face d">D</span></article>
    </section>
  </div>
  <footer class="controls">
    <div class="info"><span>20:47</span><i></i><span>kmx-ichq-ssk</span></div>
    <div class="buttons">
      <button aria-label="Micrófono"><svg width="18" height="18"><use href="#mic"/></svg></button>
      <button class="red" aria-label="Cámara"><svg width="18" height="18" viewBox="0 0 24 24"><g fill="none" stroke="#fff" stroke-width="2"><path d="M8 5h8v5l5-4v12l-3-2.500M3.500 5H3v14h13v-2M1 1l22 22"/></g></svg></button>
      <button aria-label="Subtítulos"><svg width="18" height="18" viewBox="0 0 24 24"><rect x="2" y="4" width="20" height="16" rx="1.500" fill="none" stroke="#fff" stroke-width="2.200"/><path d="M11 10.500H7v3.500h4M18 10.500h-4v3.500h4" fill="none" stroke="#fff" stroke-width="2"/></svg></button>
      <button aria-label="Reacciones"><svg width="20" height="20" viewBox="0 0 24 24"><circle cx="12" cy="12" r="9.500" fill="none" stroke="#fff" stroke-width="2.300"/><circle cx="8.500" cy="9" r="1.700" fill="#fff"/><circle cx="15.500" cy="9" r="1.700" fill="#fff"/><path d="M6.500 13h11c-.5 3-2.500 5-5.500 5s-5-2-5.500-5z" fill="#fff"/></svg></button>
      <button aria-label="Presentar ahora"><svg width="21" height="21" viewBox="0 0 24 24"><rect x="2" y="4" width="20" height="16" rx="1.500" fill="none" stroke="#fff" stroke-width="2.200"/><path d="M12 7.500l4.500 4.500H13.500v4h-3v-4H7.500z" fill="#fff"/></svg></button>
      <button aria-label="Levantar la mano"><svg width="20" height="20" viewBox="0 0 24 24"><path fill="#fff" stroke="#fff" stroke-width=".5" d="M18 24h-6.550c-1.080 0-2.140-.45-2.890-1.230l-7.300-7.610 2.070-1.830c.62-.55 1.530-.66 2.260-.27L8 14.340V4.790c0-1.380 1.120-2.500 2.500-2.500.17 0 .34.020.51.050.09-1.300 1.170-2.330 2.490-2.330.86 0 1.610.43 2.060 1.090.29-.12.61-.18.94-.18 1.380 0 2.500 1.120 2.500 2.500v.28c.16-.03.33-.05.5-.05 1.380 0 2.500 1.120 2.500 2.500V20c0 2.210-1.790 4-4 4zM4.140 15.280l5.860 6.100c.38.39.9.62 1.440.62H18c1.100 0 2-.9 2-2V6.150c0-.28-.22-.5-.5-.5s-.5.22-.5.5V12h-2V3.420c0-.28-.22-.5-.5-.5s-.5.22-.5.5V12h-2V2.510c0-.28-.22-.5-.5-.5s-.5.22-.5.5V12h-2V4.790c0-.28-.22-.5-.5-.5s-.5.23-.5.5v12.870l-5.350-2.830-.51.450z"/></svg></button>
      <button aria-label="Más opciones"><svg width="20" height="20"><use href="#dots"/></svg></button>
      <button class="red end" aria-label="Salir de la llamada"><svg width="21" height="21" viewBox="0 0 24 24"><path fill="#fff" d="M12 9c-1.600 0-3.150.25-4.600.72v3.100c0 .39-.23.74-.56.9-.98.49-1.870 1.120-2.660 1.850-.18.18-.43.28-.7.28-.28 0-.53-.11-.71-.29L.29 13.080c-.18-.17-.29-.42-.29-.7 0-.28.11-.53.29-.71C3.340 8.780 7.460 7 12 7s8.660 1.780 11.710 4.670c.18.18.29.43.29.71 0 .28-.11.53-.29.71l-2.480 2.480c-.18.18-.43.29-.71.29-.27 0-.52-.11-.7-.28-.79-.74-1.690-1.360-2.670-1.850-.33-.16-.56-.5-.56-.9v-3.100C15.150 9.250 13.600 9 12 9z"/></svg></button>
    </div>
    <div class="side">
      <button aria-label="Detalles"><svg width="22" height="22" viewBox="0 0 24 24"><path fill="#fff" d="M11 7h2v2h-2zm0 4h2v6h-2zm1-9C6.480 2 2 6.480 2 12s4.480 10 10 10 10-4.480 10-10S17.520 2 12 2zm0 18c-4.410 0-8-3.590-8-8s3.590-8 8-8 8 3.590 8 8-3.590 8-8 8z"/></svg></button>
      <button aria-label="Personas"><svg width="22" height="22" viewBox="0 0 24 24"><g fill="none" stroke="#fff" stroke-width="2"><circle cx="9.500" cy="8" r="3"/><path d="M3 18c0-3 4-4 6.500-4s6.500 1 6.500 4v1H3z"/></g><path d="M14 4a4 4 0 1 1 0 8c1.300-2 1.300-6 0-8zM17 13.200c3 .5 5.500 2 5.500 4.800v2H18v-2c0-2-.2-3.300-1-4.800z" fill="#fff"/></svg><em>5</em></button>
      <button aria-label="Chat"><svg width="22" height="22" viewBox="0 0 24 24"><path fill="#fff" d="M4 4h16v12H5.170L4 17.170V4m0-2c-1.100 0-1.990.9-1.990 2L2 22l4-4h14c1.100 0 2-.9 2-2V4c0-1.100-.9-2-2-2H4zm2 10h12v2H6v-2zm0-3h12v2H6V9zm0-3h12v2H6V6z"/></svg></button>
      <button aria-label="Actividades"><svg width="22" height="22" viewBox="0 0 24 24"><g fill="none" stroke="#fff" stroke-width="2"><path d="M12 4l3.500 6h-7z"/><path d="M3.500 14.500h6v6h-6z"/><circle cx="17.500" cy="17.500" r="3.500"/></g></svg></button>
      <button aria-label="Controles del organizador"><svg width="22" height="22" viewBox="0 0 24 24"><path d="M12 21H4V9h14v3M7.500 9V6a3.500 3.500 0 0 1 7 0v3" fill="none" stroke="#fff" stroke-width="2"/><circle cx="17.500" cy="17.500" r="5.500" fill="#fff"/><circle cx="17.500" cy="15.800" r="1.500" fill="#202124"/><path d="M14.800 19.500c1-1.600 4.400-1.600 5.400 0-1.200 1.600-4.200 1.600-5.400 0z" fill="#202124"/></svg></button>
      <i></i>
      <button class="alarm" aria-label="Tiempo restante"><svg width="21" height="21" viewBox="0 0 24 24"><path fill="#fff" d="M22 5.720l-4.600-3.860-1.290 1.530 4.600 3.860L22 5.720zM7.880 3.390L6.600 1.860 2 5.710l1.290 1.530 4.590-3.850zM12.500 8H11v6l4.750 2.850.75-1.230-4-2.370V8zM12 4c-4.970 0-9 4.030-9 9s4.020 9 9 9c4.970 0 9-4.030 9-9s-4.030-9-9-9zm0 16c-3.870 0-7-3.130-7-7s3.130-7 7-7 7 3.130 7 7-3.130 7-7 7z"/></svg></button>
      <div class="popup" role="dialog" aria-labelledby="pt">
        <h2 id="pt">La llamada terminará dentro de 14 minutos</h2>
        <p>¿Quieres que las llamadas duren más? Disfruta de llamadas más largas con un plan Premium de Google One.</p>
        <div><button>Cerrar</button><button>Habla más tiempo</button></div>
      </div>
    </div>
  </footer>
</main>
</body>
</html>
```

FILE: styles.css
```css
* { box-sizing: border-box; }
html, body { height: 100%; }
body { margin: 0; display: flex; flex-direction: column; min-height: 100vh; background: #202124; font-family: "Open Sans", "Noto Sans", sans-serif; overflow: hidden; }
button { border: 0; padding: 0; margin: 0; background: none; font: inherit; color: inherit; display: inline-flex; align-items: center; justify-content: center; white-space: nowrap; }
input, select { font: inherit; border: 0; outline: 0; margin: 0; min-width: 0; }
svg { display: block; flex: none; }
h1, h2, p { margin: 0; }
em { font-style: normal; }
.defs { position: absolute; width: 0; height: 0; }

/* Browser */
.browser { flex: none; background: #a6aab6; color: #202124; }
.tabstrip { display: flex; height: 50px; padding: 7px 0 0 7px; }
.tabsearch { width: 36px; height: 36px; border-radius: 12px; background: #d8dadf; margin-right: 7px; }
.tab { position: relative; flex: 0 1 182px; min-width: 0; display: flex; align-items: center; height: 36px; padding: 0 16px 0 14px; font-size: 14px; color: #3a3d45; }
.tab:not(.active)::after { content: ""; position: absolute; right: 0; top: 9px; width: 2px; height: 20px; background: #d8dadf; }
.tab.active { flex: 0 1 175px; height: 43px; padding: 0 13px 7px 10px; margin-right: 4px; border-radius: 12px 12px 0 0; background: #d8dadf; color: #202124; }
.tab.active::before, .tab.active::after { content: ""; position: absolute; bottom: 0; width: 12px; height: 12px; }
.tab.active::before { left: -12px; background: radial-gradient(circle at 0 0, transparent 12px, #d8dadf 12px); }
.tab.active::after { right: -12px; background: radial-gradient(circle at 100% 0, transparent 12px, #d8dadf 12px); }
.fav { width: 20px; height: 20px; margin-right: 10px; }
.title { flex: 1; min-width: 0; padding-top: 2px; overflow: hidden; white-space: nowrap; -webkit-mask-image: linear-gradient(to right, #000 70%, transparent); mask-image: linear-gradient(to right, #000 70%, transparent); }
.rec { width: 18px; height: 18px; margin: 0 15px 0 8px; }
.tab:not(.active) button { margin-left: 17px; }
.newtab { width: 40px; height: 36px; }
.winctl { display: flex; margin-left: auto; height: 36px; }
.winctl button { width: 57px; }
.toolbar { display: flex; align-items: center; height: 59px; padding: 0 16px 0 17px; background: #d8dadf; border-bottom: 2px solid #b5b9bc; border-radius: 10px 10px 0 0; }
.ln { fill: none; stroke: #202124; stroke-width: 2; }
.nav { display: flex; gap: 24px; padding: 0 21px 0 2px; width: 133px; }
.omnibox { flex: 1; display: flex; align-items: center; height: 43px; padding: 0 19px 0 7px; gap: 19px; border-radius: 22px; background: #f6f7fa; color: #5f6368; }
.site { width: 29px; height: 29px; border-radius: 50%; background: #d8dadf; margin-right: -9px; }
.url { flex: 1; font-size: 17px; padding: 0; color: transparent; background: linear-gradient(to right, #202124 134px, #6d7175 134px); -webkit-background-clip: text; background-clip: text; }
.actions { display: flex; align-items: center; gap: 23px; margin-left: 21px; }
.me { width: 25px; height: 25px; border-radius: 50%; background: #0b57a0; color: #fff; font-size: 12px; }

/* Meet shell */
.meet { flex: 1; min-height: 0; display: flex; flex-direction: column; padding: 13px 13px 0; color: #fff; font-family: Roboto, sans-serif; }
.banner { flex: none; display: flex; align-items: center; gap: 14px; height: 35px; margin-right: 4px; padding-left: 14px; border-radius: 6px; background: #3c4043; font-size: 12px; font-weight: 600; }
.av { width: 20px; height: 20px; border-radius: 50%; background: #5c6bc0; font-size: 9px; display: flex; align-items: center; justify-content: center; }
.stage { flex: 1; min-height: 0; display: flex; gap: 15px; margin-top: 14px; }
.share { flex: 1070 1 0; min-width: 0; display: flex; flex-direction: column; border-radius: 8px; overflow: hidden; background: #f3f2f1; color: #444; font-family: "Open Sans", sans-serif; font-size: 10px; }

.xtitle { flex: none; display: flex; align-items: center; height: 26px; padding-bottom: 2px; background: #1c6b42; color: #fff; }
.quick { display: flex; align-items: center; gap: 10px; width: 128px; padding-left: 15px; flex: none; }
.quick .dim { color: #4d8c69; }
.xtitle h1 { width: 271px; font-size: 9px; font-weight: 400; white-space: nowrap; }
.xsearch { display: flex; align-items: center; gap: 11px; width: 289px; height: 19px; padding-left: 15px; background: #9fcbb3; color: #2c5d43; }
.xsearch input { background: none; padding: 0; }
.xsearch input::placeholder { color: #2c5d43; opacity: 1; }
.account { display: flex; align-items: center; gap: 8px; margin-left: auto; font-size: 9px; }
.xwin { display: flex; }
.xwin button { width: 36px; }
.xwin button:first-child { margin-left: 8px; }

.xtabs { flex: none; display: flex; align-items: center; height: 24px; padding: 0 10px; gap: 22px; font-size: 10px; }
.xtabs button { height: 22px; }
.xtabs .on { font-weight: 600; color: #333; border-bottom: 3px solid #217346; }
.xtabs .sharebtn { margin-left: auto; gap: 3px; height: 18px; padding: 0 7px 0 6px; background: #fff; color: #217346; font-weight: 600; }

.ribbon { flex: none; display: flex; height: 77px; padding-top: 3px; border-bottom: 2px solid #d5d5d5; }
.grp { position: relative; display: flex; flex-direction: column; align-items: center; border-right: 1px solid #d0d0d0; flex: none; }
.g1 { width: 75px; } .g2 { width: 182px; } .g3 { width: 232px; } .g4 { width: 123px; } .g5 { width: 175px; } .g6 { width: 82px; } .g7 { width: 146px; }
.lbl { margin-top: auto; line-height: 14px; font-size: 9px; }
.g1 .lbl { align-self: flex-start; padding-left: 4px; }
.ln2 { position: absolute; right: 2px; bottom: 2px; }
.c { color: #666; }
.body { display: flex; align-items: flex-start; justify-content: space-around; width: 100%; padding-top: 2px; }
.big { flex-direction: column; line-height: 12px; text-align: center; padding-top: 1px; }
.big span { display: block; margin-top: 4px; }
.big span .c { display: inline-block; }
.g1 .big { width: 38px; }
.g1 .big span { margin-top: 2px; }
.col { display: flex; flex-direction: column; align-items: flex-start; gap: 4px; }
.col button { height: 14px; gap: 2px; }
.g6 .col { padding-top: 1px; width: 100%; padding-left: 9px; }
.g6 .col button { gap: 3px; }
.g5 .body { padding: 2px 2px 0 6px; justify-content: space-between; }
.g7 .body { padding: 2px 4px 0 8px; }
.rows { width: 100%; padding: 4px 6px; }
.row { display: flex; align-items: center; height: 20px; gap: 2px; }
.r2 { margin-top: 5px; gap: 3px; }
select { appearance: none; height: 19px; padding: 0 4px; color: #333; background: #fff url("data:image/svg+xml,%3Csvg xmlns='http://www.w3.org/2000/svg' width='8' height='8'%3E%3Cpath d='M1.500 2.500l2.500 2.500 2.500-2.500' fill='none' stroke='%23555'/%3E%3C/svg%3E") no-repeat right 2px center; border: 1px solid #d0d0d0; }
.ff { width: 96px; } .fs { width: 34px; } .nf { width: 110px; }
.ag, .as { width: 20px; font-size: 13px; }
.as { font-size: 11px; }
.ag sup, .as sup { font-size: 9px; color: #2b7cd3; line-height: 8px; }
.r2 .b, .r2 .i, .r2 .u { width: 17px; font-size: 12px; }
.b { font-weight: 700; } .i { font-style: italic; } .u { text-decoration: underline; }
.sep { width: 1px; height: 14px; background: #d5d5d5; margin: 0 3px; }
.al { gap: 0; }
.al button { width: 19px; height: 19px; }
.al .sel { background: #cfcfcf; border: 1px solid #a5a5a5; }
.al .ori { margin-left: 5px; }
.al .wrap { width: auto; margin-left: 15px; padding: 0 4px; gap: 2px; background: #cfcfcf; border: 1px solid #a5a5a5; }
.al .merge { width: auto; margin-left: 7px; gap: 2px; }
.num .lg { font-size: 14px; width: 15px; }
.num .sm { font-size: 8px; margin: 0 2px; }
.num .sep { margin: 0 1px; }
.num .dec { display: block; font-size: 8px; line-height: 8px; text-align: right; }
.dec b { color: #2b7cd3; }
.collapse { margin: auto 6px 2px auto; }

.fbar { flex: none; display: flex; align-items: center; height: 34px; padding: 0 4px 2px 4px; background: #e6e6e6; }
.fbar .namebox { width: 78px; height: 20px; border-color: #e0e0e0; }
.grip { width: 25px; text-align: center; color: #999; font-size: 12px; }
.fx { display: flex; align-items: center; justify-content: space-around; width: 84px; height: 20px; background: #fff; }
.fx .f { font: italic 12px "Liberation Serif", serif; }
.fx small { font-size: 8px; }
.formula { flex: 1; height: 20px; margin-left: 4px; padding: 0 9px; font-family: Lato, "Liberation Sans", sans-serif; font-size: 11px; color: #333; background: #fff url("data:image/svg+xml,%3Csvg xmlns='http://www.w3.org/2000/svg' width='8' height='8'%3E%3Cpath d='M1.500 2.500l2.500 2.500 2.500-2.500' fill='none' stroke='%23555'/%3E%3C/svg%3E") no-repeat right 2px center; }

.sheetwrap { position: relative; flex: 1; min-height: 0; display: flex; background: #fff; }
.sheet { flex: 1; min-width: 0; overflow: hidden; }
table { width: 100%; table-layout: fixed; border-collapse: collapse; font: 13px/19px Lato, "Liberation Sans", sans-serif; color: #222; }
.w0 { width: 25px; } .wa { width: 76px; } .wb { width: 75px; } .wc { width: 162px; } .wd { width: 61px; } .we { width: 287px; } .wg { width: 28px; } .wh { width: 75px; } .wi { width: 75px; }
th { padding: 0; font-weight: 400; color: #444; background: #e6e6e8; border: 1px solid #c9c9cc; border-top: 0; }
thead th { height: 19px; line-height: 18px; }
thead .cur { padding-left: 36px; background: #d0d0d0; border-bottom: 2px solid #217346; }
.corner svg { margin: 3px 2px 0 auto; }
tbody th { vertical-align: bottom; line-height: 18px; background: #e8e4ea; border-left: 0; }
td { padding: 0 2px; border: 1px solid #555; white-space: nowrap; overflow: hidden; }
td.n { border: 0; }
td.n.fr { border-bottom: 1px solid #bbb; }
td.fz, th.fz { border-right: 1px solid #999; }
.t1 td { height: 19px; }
.t2 td { height: 19px; line-height: 17px; }
.t2 .pb { background: #fccfae; border-left-color: #555; padding: 0; font-size: 12px; }
.t3 td { height: 37px; line-height: 18px; text-align: center; }
.t3 td:not(.n) { background: #4472c8; color: #0d1b3d; border-top: 2px solid #111; border-bottom-color: #8e9cc0; white-space: normal; padding: 0; }
.t3 .l, .t3 td.crit { white-space: nowrap; }
.t4 td { height: 151px; }
.t5 td { height: 140px; vertical-align: top; }
td.r { text-align: right; } td.m { text-align: center; } td.l, .t3 td.l { text-align: left; padding: 0; }
.t3 td.crit { padding-left: 34px; }
.clip { height: 150px; overflow: hidden; }
.t5 td.p1 { padding-top: 19px; } .t5 td.p2 { padding-top: 66px; } .t5 td.p3 { padding-top: 113px; }
.vscroll { flex: none; width: 16px; display: flex; flex-direction: column; align-items: center; background: #e6e6e6; }
.arr { display: flex; align-items: center; justify-content: center; width: 12px; height: 12px; font: 8px "DejaVu Sans", sans-serif; color: #555; background: #fff; border: 1px solid #bbb; }
.thumb { flex: 216; width: 12px; background: #fff; border: 1px solid #bbb; }
.track { flex: 128; width: 12px; background: #d9d9d9; }
.coltip { position: absolute; left: 726px; bottom: 0; width: 75px; height: 15px; padding-left: 4px; background: #fff; border: 1px solid #ccc; color: #777; font-size: 9px; line-height: 13px; }

.stabs { flex: none; display: flex; align-items: stretch; height: 22px; background: #e6e6e6; border-top: 1px solid #aaa; border-bottom: 1px solid #ccc; color: #777; }
.prev { width: 78px; display: flex; align-items: center; justify-content: center; gap: 14px; color: #bbb; font-size: 9px; }
.stabs button { padding: 0 10px; border-right: 1px solid #bbb; }
.stabs .on { padding: 0 9px; height: 19px; background: #fff; color: #217346; font-weight: 700; border: 0; border-bottom: 2px solid #217346; }
.stabs .add { border: 0; padding: 0 26px; }
.hscroll { display: flex; align-items: center; margin-left: auto; width: 440px; padding-right: 17px; }
.ht { flex: 1; height: 12px; display: flex; padding: 0 33% 0 26%; background: #dcdcdc; }
.hthumb { flex: 1; background: #fff; border: 1px solid #999; }
.status { position: relative; flex: none; display: flex; align-items: center; height: 17px; padding: 0 5px; background: #f1f1f1; font-size: 9px; }
.views { display: flex; align-items: center; margin-left: auto; height: 100%; }
.views button { width: 31px; height: 17px; }
.views .sel { background: #d0d0d0; }
.views > span { width: 16px; text-align: center; font-size: 12px; }
.views .pct { width: 27px; margin-left: 0; font-size: 9px; }
.views input { appearance: none; width: 78px; height: 12px; background: linear-gradient(#aaa, #aaa) center / 100% 1px no-repeat; }
.views input::-webkit-slider-thumb { appearance: none; width: 5px; height: 9px; background: #666; }
.cursor { position: absolute; right: 187px; top: -9px; }

.taskbar { flex: none; display: flex; align-items: stretch; height: 31px; background: #1e1d1f; color: #ddd; font-size: 10px; }
.start { width: 37px; }
.tsearch { display: flex; align-items: center; width: 226px; padding-left: 9px; gap: 9px; background: #f4f1f2; color: #444; overflow: hidden; }
.tsearch input { flex: 1; padding: 0; font-size: 11px; background: none; }
.tsearch input::placeholder { color: #444; opacity: 1; }
.tv { width: 40px; }
.apps { display: grid; grid-template-columns: repeat(10, 1fr); width: 384px; }
.apps button { border-bottom: 2px solid transparent; margin: 0 4px; }
.apps svg { width: 19px; height: 19px; }
.apps .run { border-color: #76b9ed; }
.apps .cur { margin: 0; background: #4d4c4e; }
.tray { display: flex; align-items: center; gap: 9px; margin-left: auto; padding-right: 12px; }
.tray > svg:first-child { margin-right: -4px; }
.temp { margin-right: 8px; }
.clock { text-align: center; line-height: 14px; width: 44px; }
.notif { display: flex; align-items: flex-start; width: 20px; }
.notif em { display: flex; align-items: center; justify-content: center; width: 12px; height: 12px; margin: 6px 0 0 -7px; border-radius: 50%; background: #333; border: 1px solid #999; font-size: 8px; }

/* Participants */
.tiles { flex: 489 1 0; align-self: center; display: grid; grid-template-columns: 1fr 1fr; grid-auto-rows: 199px; gap: 10px; }
.tile { position: relative; display: grid; place-items: center; border-radius: 6px; background: #3c4043; }
.tile.speaking { border: 4px solid #669df6; }
.tile > * { grid-area: 1 / 1; }
.face { display: flex; align-items: center; justify-content: center; width: 73px; height: 73px; border-radius: 50%; font-size: 38px; }
.s { background: #5c6bc0; color: #fff; font-size: 30px; font-weight: 500; z-index: 1; }
.y { background: #ec407a; } .a { background: #78909c; } .d { background: #01579b; }
.halo { width: 104px; height: 104px; border-radius: 50%; background: #595d60; }
.name { place-self: end start; padding: 0 0 9px 13px; font-size: 12px; line-height: 16px; font-weight: 500; }
.speaking .name { padding: 0 0 5px 9px; }
.wave { place-self: start end; margin: 6px; width: 22px; height: 22px; border-radius: 50%; background: #1967d2; display: flex; align-items: center; justify-content: center; gap: 2px; }
.wave i { width: 3px; height: 7px; border-radius: 2px; background: #fff; }
.wave i:nth-child(2) { height: 13px; }
.pill { z-index: 2; display: flex; align-items: center; justify-content: space-around; width: 110px; height: 37px; border-radius: 19px; background: rgba(32, 33, 36, .6); color: #e8eaed; }

/* Call controls */
.controls { flex: none; display: grid; grid-template-columns: 1fr auto 1fr; align-items: center; height: 65px; }
.controls .info { display: flex; align-items: center; gap: 10px; padding: 4px 0 0 7px; font-size: 14px; font-weight: 600; }
.info i, .side > i { width: 1px; height: 14px; background: #fff; }
.buttons { display: flex; gap: 9px; padding-top: 5px; }
.buttons button { width: 34px; height: 34px; border-radius: 50%; background: #3c4043; color: #fff; }
.buttons .red { background: #ea4335; }
.buttons .end { width: 47px; border-radius: 17px; }
.side { position: relative; justify-self: end; display: flex; align-items: center; padding: 5px 0 0; margin-right: -3px; }
.side > button { position: relative; width: 40px; height: 34px; }
.side > button em { position: absolute; left: 21px; top: -11px; width: 17px; height: 17px; border-radius: 50%; background: #5f6368; font-size: 10px; line-height: 17px; font-weight: 600; }
.side > i { height: 26px; margin: 0 10px; background: #5f6368; }
.side .alarm { width: 33px; border-radius: 6px; background: #4285f4; }
.popup { position: absolute; right: 2px; bottom: 49px; width: 321px; padding: 14px 14px 18px; border-radius: 6px; background: #fff; color: #202124; }
.popup::after { content: ""; position: absolute; right: 8px; top: 100%; border: 9px solid transparent; border-top: 11px solid #fff; border-bottom: 0; }
.popup h2 { font-size: 14px; line-height: 20px; font-weight: 400; }
.popup p { font-size: 12px; line-height: 17px; color: #3c4043; }
.popup div { display: flex; justify-content: flex-end; gap: 22px; padding: 18px 7px 0 0; color: #1a73e8; font-size: 12px; line-height: 20px; font-weight: 500; }
```
